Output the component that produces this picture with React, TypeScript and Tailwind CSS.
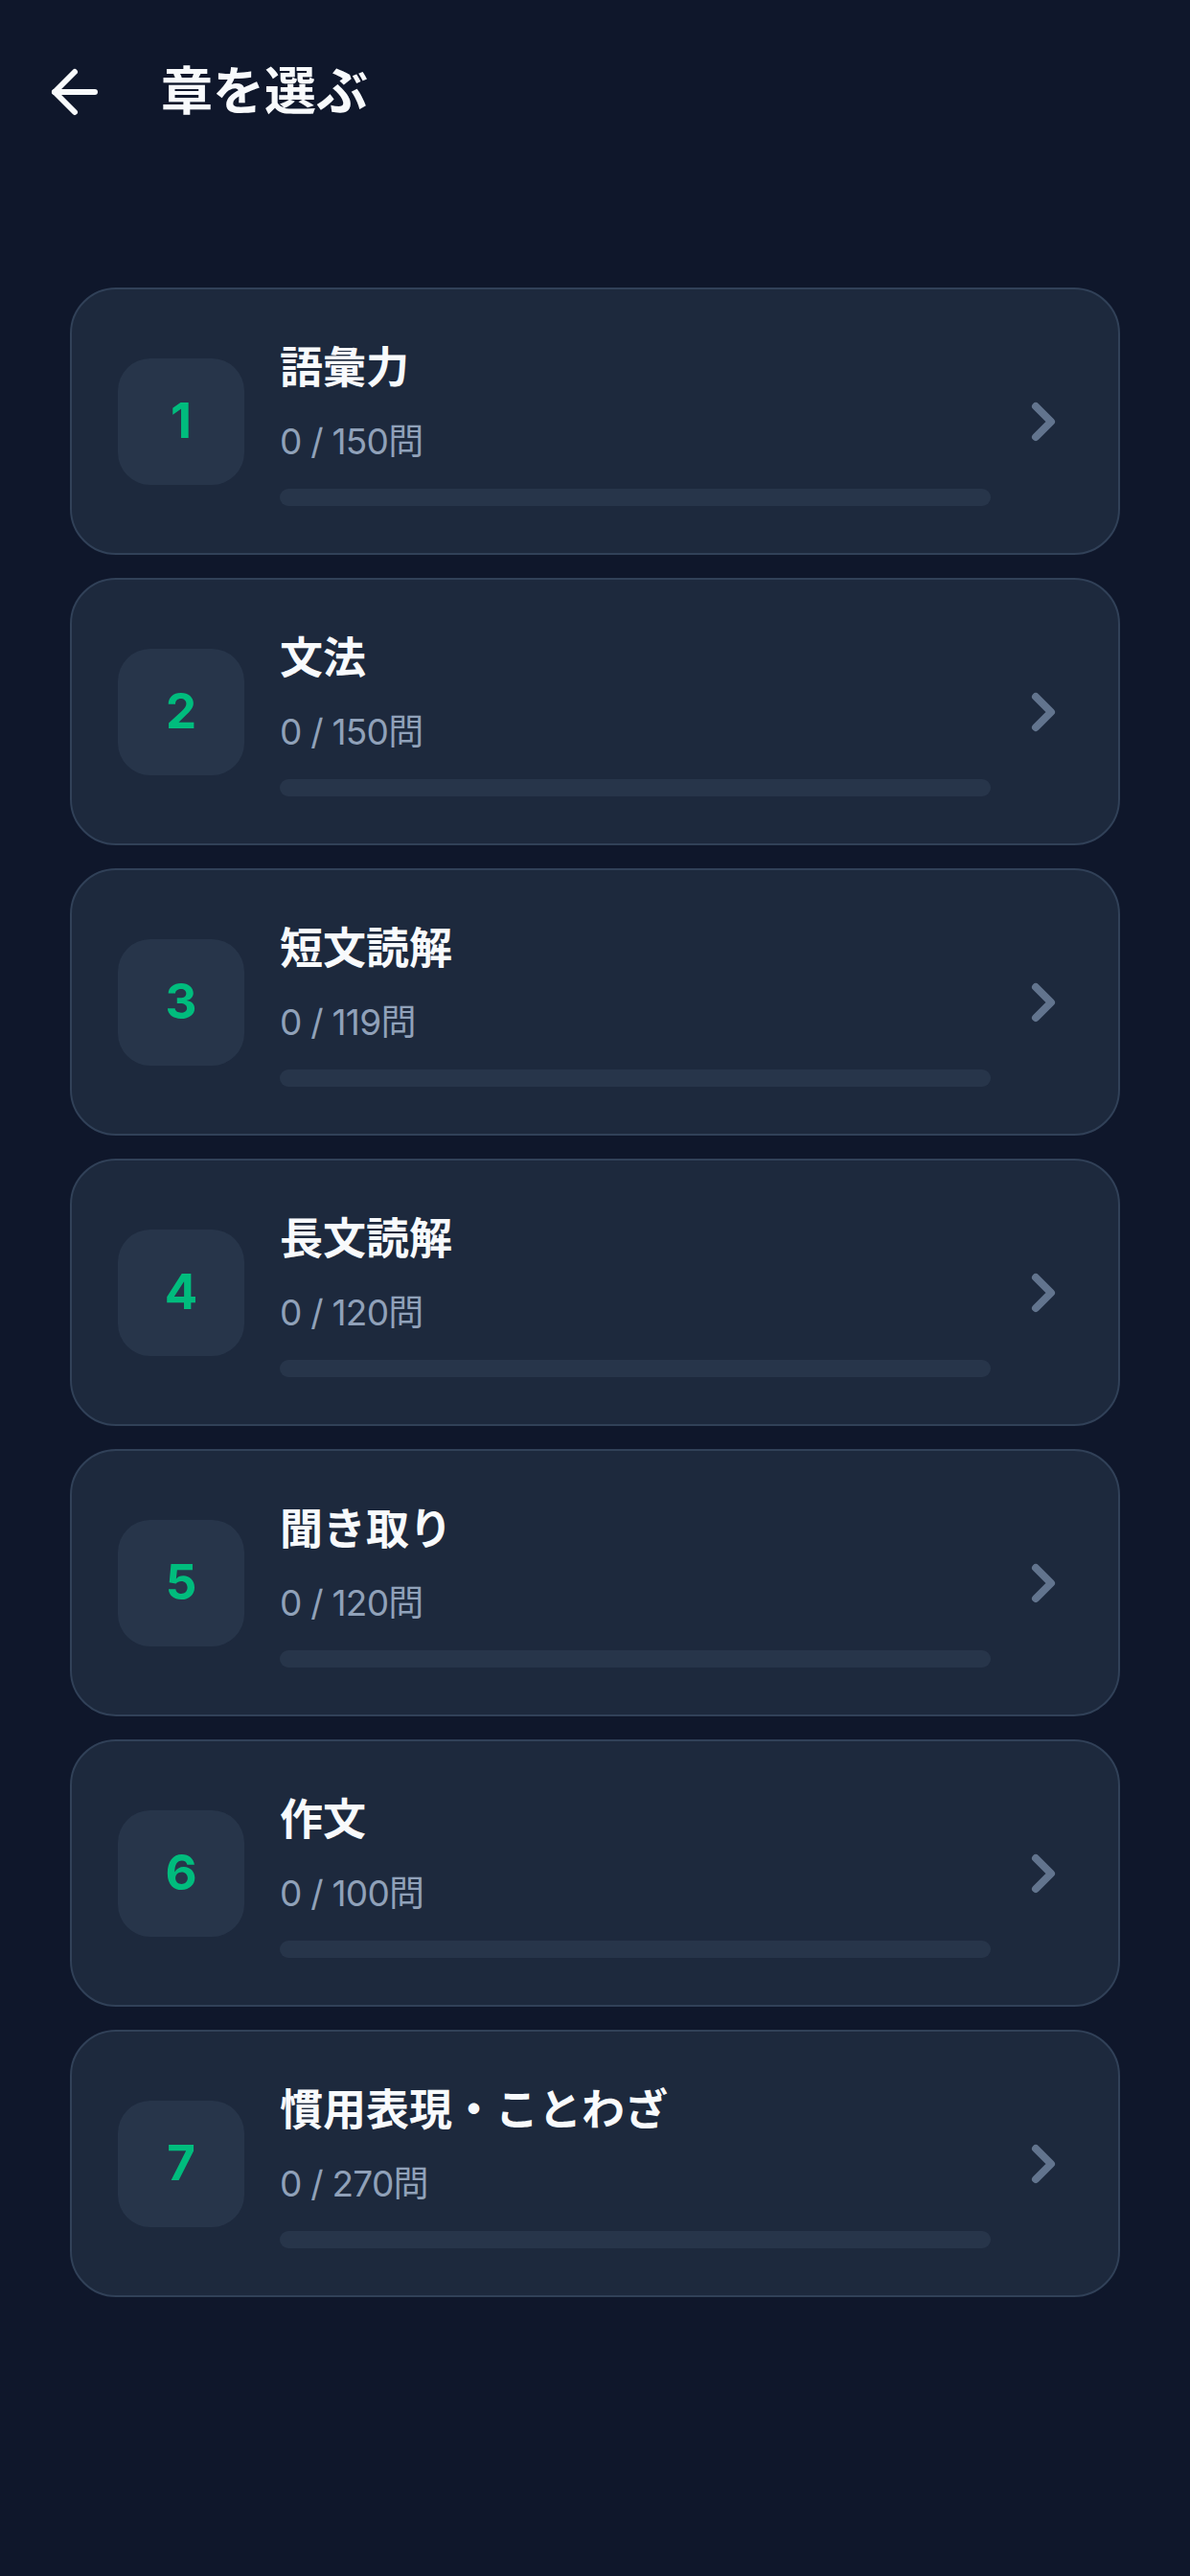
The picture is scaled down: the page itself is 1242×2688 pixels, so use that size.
import React from 'react';
import { ArrowLeft, ChevronRight } from 'lucide-react';

interface Chapter {
  id: number;
  title: string;
  done: number;
  total: number;
}

const chapters: Chapter[] = [
  { id: 1, title: '語彙力', done: 0, total: 150 },
  { id: 2, title: '文法', done: 0, total: 150 },
  { id: 3, title: '短文読解', done: 0, total: 119 },
  { id: 4, title: '長文読解', done: 0, total: 120 },
  { id: 5, title: '聞き取り', done: 0, total: 120 },
  { id: 6, title: '作文', done: 0, total: 100 },
  { id: 7, title: '慣用表現・ことわざ', done: 0, total: 270 },
];

const font = { fontFamily: '"Inter", "Noto Sans CJK JP", sans-serif' };

function ChapterCard({ chapter }: { chapter: Chapter }) {
  const pct = chapter.total ? (chapter.done / chapter.total) * 100 : 0;
  return (
    <button className="flex h-[279px] w-full items-center rounded-[48px] border-2 border-slate-700 bg-slate-800 pl-[48px] pr-[46px] text-left">
      <div className="flex h-[132px] w-[132px] shrink-0 items-center justify-center rounded-[34px] bg-slate-700/50 text-[51px] font-bold text-emerald-500">
        {chapter.id}
      </div>
      <div className="ml-[37px] flex flex-1 flex-col pt-[6px]">
        <div className="text-[45px] font-bold leading-[54px] text-slate-50">{chapter.title}</div>
        <div className="mt-[26px] text-[37px] leading-[47px] tracking-[-0.02em] text-slate-400">
          {chapter.done} / {chapter.total}問
        </div>
        <div className="mt-[26px] h-[18px] w-full overflow-hidden rounded-full bg-slate-700/50">
          <div className="h-full rounded-full bg-emerald-500" style={{ width: `${pct}%` }} />
        </div>
      </div>
      <ChevronRight className="ml-[23px] shrink-0 text-slate-500" size={64} strokeWidth={3} />
    </button>
  );
}

export default function App() {
  return (
    <div className="min-h-screen bg-slate-900 text-slate-50" style={font}>
      <header className="flex items-center pl-[42px] pt-[60px]">
        <button className="flex h-[72px] w-[72px] items-center justify-center text-slate-50">
          <ArrowLeft size={72} strokeWidth={2} />
        </button>
        <h1 className="ml-[54px] text-[54px] font-bold leading-[72px]">章を選ぶ</h1>
      </header>
      <main className="mx-[73px] mt-[168px] flex flex-col gap-[24px] pb-[100px]">
        {chapters.map((c) => (
          <ChapterCard key={c.id} chapter={c} />
        ))}
      </main>
    </div>
  );
}
